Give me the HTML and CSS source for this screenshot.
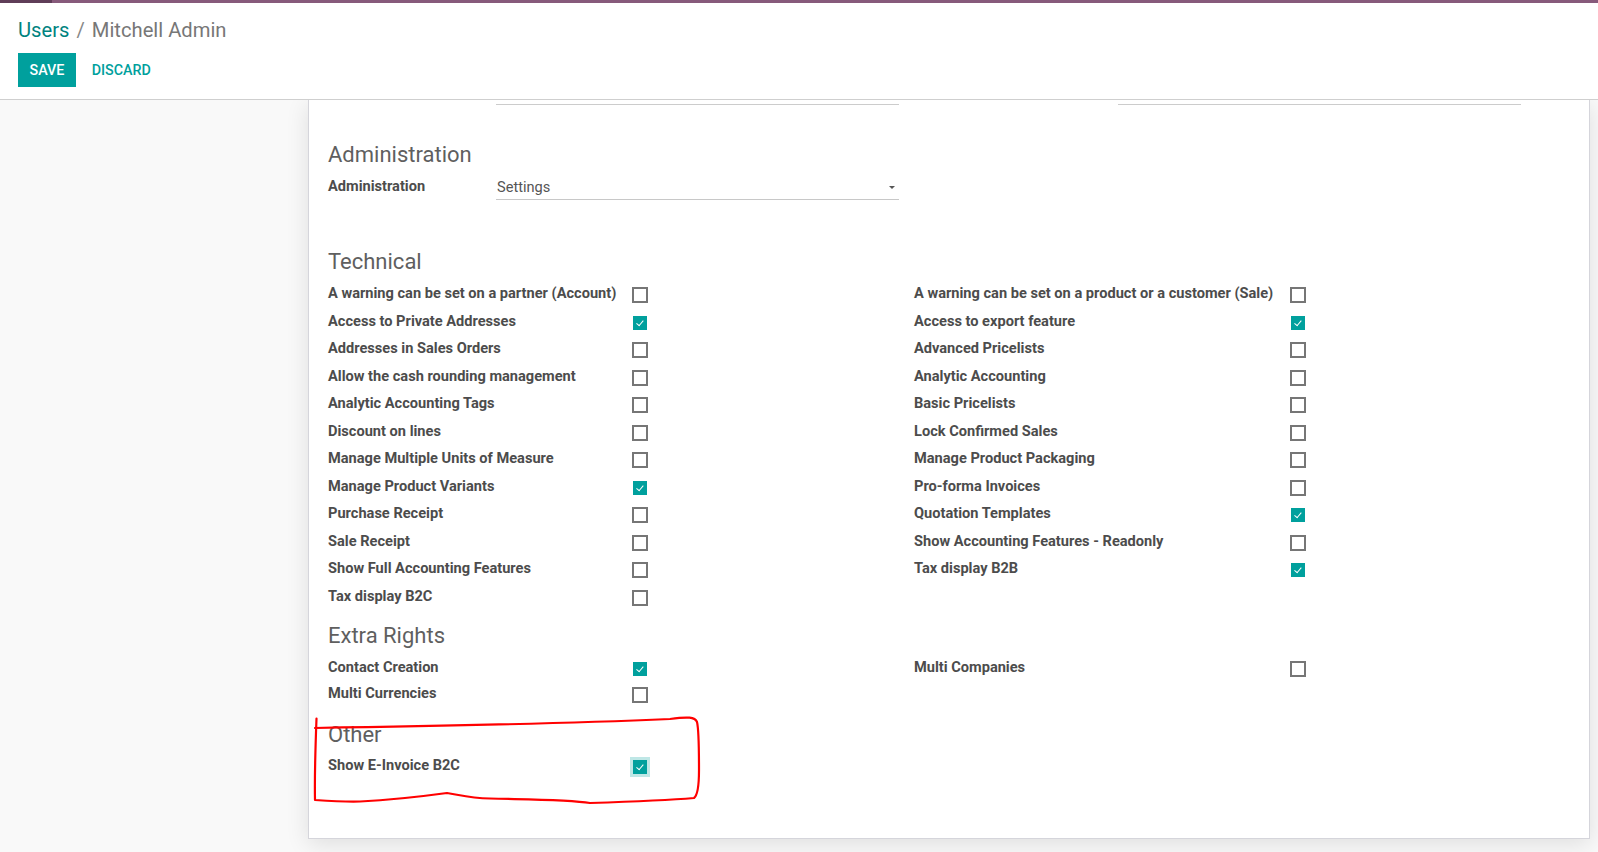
FILE: index.html
```html
<!DOCTYPE html>
<html>
<head>
<meta charset="utf-8">
<title>Users / Mitchell Admin</title>
<link rel="stylesheet" href="styles.css">
</head>
<body>
<div class="navstrip"></div>
<header class="control-panel">
  <div class="breadcrumb"><span class="crumb-link">Users</span><span class="crumb-sep">/</span><span class="crumb-active">Mitchell Admin</span></div>
  <div class="cp-buttons">
    <button class="btn btn-primary">Save</button>
    <button class="btn btn-link">Discard</button>
  </div>
</header>
<main class="form-bg">
  <div class="sheet">
    <div class="partial-row">
      <span class="line line-left"></span>
      <span class="line line-right"></span>
    </div>

    <h2 class="sep first">Administration</h2>
    <div class="admin-row">
      <span class="label">Administration</span>
      <div class="select"><span>Settings</span><span class="caret"></span></div>
    </div>

    <h2 class="sep technical">Technical</h2>
    <div class="groups">
      <div class="group left">
        <span class="label">A warning can be set on a partner (Account)</span><span class="cb"></span>
        <span class="label">Access to Private Addresses</span><span class="cb on"></span>
        <span class="label">Addresses in Sales Orders</span><span class="cb"></span>
        <span class="label">Allow the cash rounding management</span><span class="cb"></span>
        <span class="label">Analytic Accounting Tags</span><span class="cb"></span>
        <span class="label">Discount on lines</span><span class="cb"></span>
        <span class="label">Manage Multiple Units of Measure</span><span class="cb"></span>
        <span class="label">Manage Product Variants</span><span class="cb on"></span>
        <span class="label">Purchase Receipt</span><span class="cb"></span>
        <span class="label">Sale Receipt</span><span class="cb"></span>
        <span class="label">Show Full Accounting Features</span><span class="cb"></span>
        <span class="label">Tax display B2C</span><span class="cb"></span>
      </div>
      <div class="group right">
        <span class="label">A warning can be set on a product or a customer (Sale)</span><span class="cb"></span>
        <span class="label">Access to export feature</span><span class="cb on"></span>
        <span class="label">Advanced Pricelists</span><span class="cb"></span>
        <span class="label">Analytic Accounting</span><span class="cb"></span>
        <span class="label">Basic Pricelists</span><span class="cb"></span>
        <span class="label">Lock Confirmed Sales</span><span class="cb"></span>
        <span class="label">Manage Product Packaging</span><span class="cb"></span>
        <span class="label">Pro-forma Invoices</span><span class="cb"></span>
        <span class="label">Quotation Templates</span><span class="cb on"></span>
        <span class="label">Show Accounting Features - Readonly</span><span class="cb"></span>
        <span class="label">Tax display B2B</span><span class="cb on"></span>
      </div>
    </div>

    <h2 class="sep">Extra Rights</h2>
    <div class="groups compact">
      <div class="group left">
        <span class="label">Contact Creation</span><span class="cb on"></span>
        <span class="label">Multi Currencies</span><span class="cb"></span>
      </div>
      <div class="group right">
        <span class="label">Multi Companies</span><span class="cb"></span>
      </div>
    </div>

    <h2 class="sep other">Other</h2>
    <div class="groups">
      <div class="group left">
        <span class="label">Show E-Invoice B2C</span><span class="cb on focus"></span>
      </div>
    </div>
  </div>
</main>

<svg class="annotation" width="1598" height="852" viewBox="0 0 1598 852" aria-hidden="true">
  <path d="M 316.5 718.5 C 315.5 745, 314.5 775, 315 800 C 330 801, 345 802, 360 801.5 C 390 800, 425 796, 447 793 C 460 795, 470 798, 490 798.5 C 530 799.5, 570 799.5, 590 803 C 620 802, 670 800, 694 798 C 698 795, 699 785, 699 770 C 699 750, 699 730, 697 722 C 695 717, 688 716.5, 670 719 C 600 722, 450 726, 315 728" fill="none" stroke="#ff0000" stroke-width="2.2" stroke-linecap="round" stroke-linejoin="round"/>
</svg>
</body>
</html>
```

FILE: styles.css
```css
* { box-sizing: border-box; }

html, body {
  margin: 0;
  padding: 0;
}

body {
  position: relative;
  width: 1598px;
  height: 852px;
  overflow: hidden;
  font-family: Roboto, "Noto Sans", "Liberation Sans", sans-serif;
  font-size: 14.3px;
  color: #4c4c4c;
  background: #ffffff;
  display: flex;
  flex-direction: column;
}

.navstrip {
  height: 3px;
  flex: 0 0 3px;
  background: linear-gradient(to right, #5f3d58 0, #5f3d58 52px, #875a7b 52px);
}

.control-panel {
  flex: 0 0 97px;
  height: 97px;
  padding: 0 18px;
  background: #ffffff;
  border-bottom: 1px solid #cfcfcf;
}

.breadcrumb {
  margin-top: 15.2px;
  font-size: 20.2px;
  line-height: 24px;
  white-space: nowrap;
}

.crumb-link { color: #00837f; }
.crumb-sep { color: #888; margin: 0 7px; }
.crumb-active { color: #777777; }

.cp-buttons {
  margin-top: 10.8px;
  display: flex;
  align-items: center;
}

.btn {
  height: 34px;
  border: none;
  font-family: inherit;
  font-size: 14.3px;
  font-weight: 500;
  text-transform: uppercase;
  cursor: pointer;
  background: transparent;
}

.btn-primary {
  width: 58px;
  padding: 0;
  background: #00a09d;
  color: #ffffff;
}

.btn-link {
  padding: 0 11px;
  margin-left: 4.7px;
  color: #00a09d;
}

.form-bg {
  flex: 1 1 auto;
  background: #f9f9f9;
  padding: 0 8px 13px 308px;
  display: flex;
  overflow: hidden;
}

.sheet {
  width: 1282px;
  background: #ffffff;
  border: 1px solid #d5d5db;
  border-top: none;
  box-shadow: 0 5px 22px rgba(0, 0, 0, 0.11);
  padding: 0 0 0 19px;
}

.partial-row {
  position: relative;
  height: 5px;
  display: grid;
  grid-template-columns: 168px 403px 219px 403px;
  align-items: end;
}

.line {
  height: 1px;
  background: #cccccc;
}
.line-left { grid-column: 2; }
.line-right { grid-column: 4; }

.sep {
  margin: 0;
  font-size: 22px;
  font-weight: 400;
  line-height: 35.5px;
  height: 35.5px;
  color: #5f5f5f;
}

.sep.first { margin-top: 32.25px; }
.sep.technical { margin-top: 44px; }
.sep.other { margin-bottom: -1px; }

.admin-row {
  height: 27.5px;
  display: grid;
  grid-template-columns: 168px 403px;
  align-items: center;
}

.label {
  font-size: 14.6px;
  font-weight: 700;
  line-height: 21px;
  white-space: nowrap;
  color: #4c4c4c;
}

.select {
  height: 27.5px;
  display: flex;
  align-items: center;
  justify-content: space-between;
  padding: 2px 4px 0 1px;
  border-bottom: 1px solid #c8c8c8;
  color: #555555;
  font-size: 14.6px;
}

.caret {
  width: 0;
  height: 0;
  border-left: 3px solid transparent;
  border-right: 3px solid transparent;
  border-top: 3px solid #555555;
}

.groups {
  display: grid;
  grid-template-columns: 586px 1fr;
  align-items: start;
  margin-bottom: 8.5px;
}

.group {
  display: grid;
  grid-auto-rows: 27.5px;
  align-items: center;
}

.groups.compact .group { grid-auto-rows: 26.5px; }
.groups.compact { margin-bottom: 10.5px; }

.group.left { grid-template-columns: 304px 16px; }
.group.right { grid-template-columns: 376px 16px; }

.cb {
  width: 16px;
  height: 16px;
  margin-top: 3px;
  border: 2px solid #767676;
  background: #ffffff;
  position: relative;
}

.cb.on {
  width: 14px;
  height: 14px;
  margin-left: 1px;
  border: none;
  background: #00a09d;
}

.cb.on::after {
  content: "";
  position: absolute;
  left: 4.6px;
  top: 3.2px;
  width: 3.2px;
  height: 5.6px;
  border-right: 1.7px solid #ffffff;
  border-bottom: 1.7px solid #ffffff;
  transform: rotate(40deg);
}

.cb.focus {
  box-shadow: 0 0 0 3px rgba(0, 160, 157, 0.25);
}

.annotation {
  position: absolute;
  left: 0;
  top: 0;
  pointer-events: none;
}
```
